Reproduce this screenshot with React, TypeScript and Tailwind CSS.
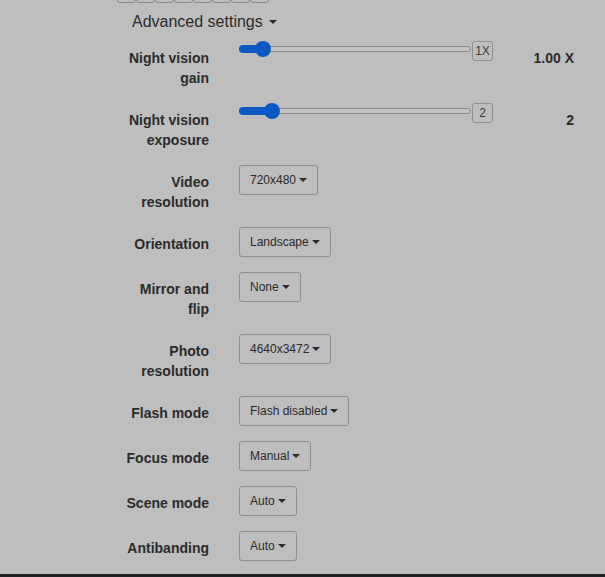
import React from 'react';

type Row = { label: string; value: string };

const SELECTS: Row[] = [
  { label: 'Video resolution', value: '720x480' },
  { label: 'Orientation', value: 'Landscape' },
  { label: 'Mirror and flip', value: 'None' },
  { label: 'Photo resolution', value: '4640x3472' },
  { label: 'Flash mode', value: 'Flash disabled' },
  { label: 'Focus mode', value: 'Manual' },
  { label: 'Scene mode', value: 'Auto' },
  { label: 'Antibanding', value: 'Auto' },
];

function Caret() {
  return (
    <span className="inline-block w-0 h-0 border-t-[4px] border-t-[#2b2b2b] border-x-[4px] border-x-transparent align-middle" />
  );
}

function Label({ children }: { children: React.ReactNode }) {
  return (
    <div className="w-[92px] ml-[117px] mr-[30px] shrink-0 pt-[7px] text-right text-[14px] leading-5 font-bold">
      {children}
    </div>
  );
}

function Slider({ thumb, badge, value }: { thumb: number; badge: string; value: string }) {
  return (
    <div className="flex-1 flex pr-[31px]">
      <div className="relative w-[232px] h-[20px]">
        <div className="absolute left-0 right-0 top-[5px] h-[6px] rounded-full border border-[#8a8a8a] bg-[#c4c4c4]" />
        <div
          className="absolute left-0 top-[4px] h-[8px] rounded-full bg-[#0b58c4]"
          style={{ width: thumb }}
        />
        <div
          className="absolute top-0 w-[16px] h-[16px] rounded-full bg-[#0b58c4]"
          style={{ left: thumb - 8 }}
        />
      </div>
      <div className="ml-[1px] w-[21px] h-[20px] rounded-[3px] border border-[#8f8f8f] text-[12px] leading-[18px] text-center text-[#3a3a3a]">
        {badge}
      </div>
      <div className="flex-1 pt-[7px] text-right text-[14px] leading-5 font-bold">{value}</div>
    </div>
  );
}

export default function App() {
  return (
    <div className="min-h-screen bg-[#bebebe] text-[#2b2b2b] font-['Liberation_Sans',Arial,sans-serif]">
      {/* button group cut off at the top */}
      <div className="h-[3px] overflow-hidden flex items-end ml-[117px]">
        {Array.from({ length: 8 }).map((_, i) => (
          <div key={i} className="w-[19px] h-[20px] shrink-0 rounded-[3px] border border-[#8a8a8a]" />
        ))}
      </div>

      <div className="pt-[8px] mb-[8px] ml-[132px] text-[16px] leading-[22px] flex items-center">
        Advanced settings
        <span className="ml-[6px] flex">
          <Caret />
        </span>
      </div>

      <div className="flex mb-[15px]">
        <Label>Night vision gain</Label>
        <Slider thumb={24} badge="1X" value="1.00 X" />
      </div>
      <div className="flex mb-[15px]">
        <Label>Night vision exposure</Label>
        <Slider thumb={33} badge="2" value="2" />
      </div>

      {SELECTS.map((row, i) => (
        <div key={row.label} className={i === SELECTS.length - 1 ? 'flex mb-[13px]' : 'flex mb-[15px]'}>
          <Label>{row.label}</Label>
          <div>
            <button className="h-[30px] px-[10px] rounded-[3px] border border-[#8f8f8f] text-[12px] leading-[18px] text-[#2b2b2b] flex items-center">
              {row.value}
              <span className="ml-[3px] flex">
                <Caret />
              </span>
            </button>
          </div>
        </div>
      ))}

      <div className="h-[20px] bg-[#1f2326]" />
    </div>
  );
}
